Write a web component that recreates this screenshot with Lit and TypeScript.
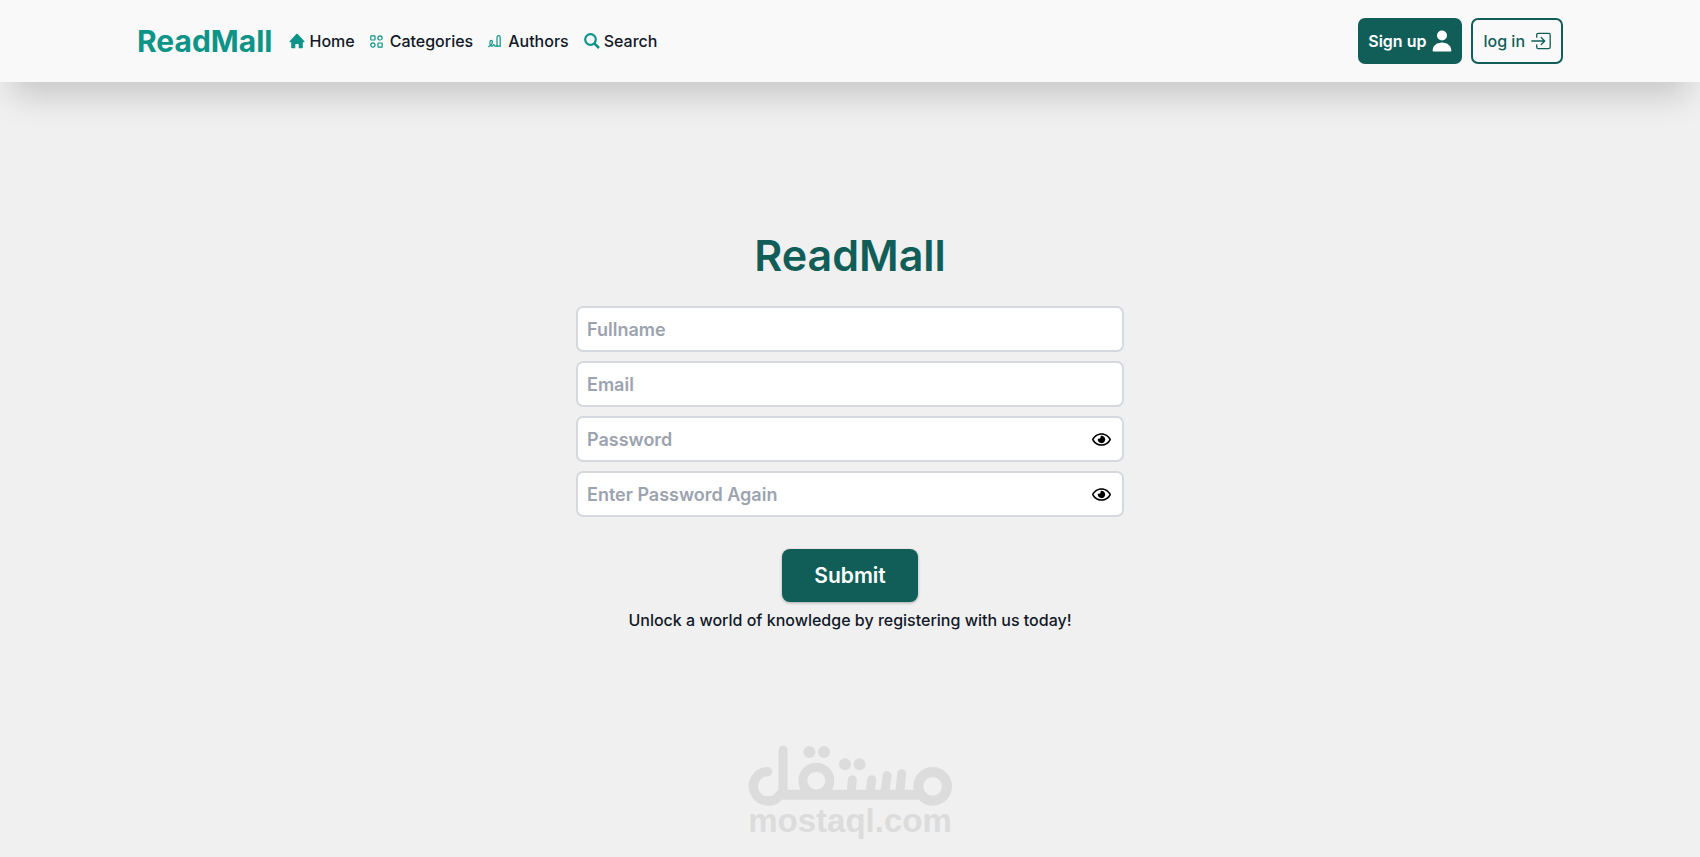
import { LitElement, html, css, svg } from "lit";
import { customElement, state } from "lit/decorators.js";

const homeIcon = html`<svg class="icon home" viewBox="0 0 16 16" aria-hidden="true">
  <path fill="currentColor" d="M7.300 1.100.8 7.900c-.6.600-.3 1.300.5 1.300H2.200v5.200c0 .5.3.8.8.8h3.300v-3.600c0-.3.2-.5.5-.5h2.400c.3 0 .5.2.5.5v3.600H13c.5 0 .8-.3.8-.8V9.200h.9c.8 0 1.100-.7.500-1.300L8.700 1.100a1 1 0 0 0-1.400 0Z"/>
</svg>`;

const categoriesIcon = html`<svg class="icon small" viewBox="0 0 13 13" fill="none" stroke="currentColor" stroke-width="1.200" aria-hidden="true">
  <rect x=".8" y=".8" width="4.200" height="4.200" rx=".4"/>
  <circle cx="10" cy="2.900" r="2.100"/>
  <circle cx="2.900" cy="10" r="2.100"/>
  <rect x="8" y="8" width="4.200" height="4.200" rx=".4"/>
</svg>`;

const authorsIcon = html`<svg class="icon small" viewBox="0 0 13 13" fill="none" stroke="currentColor" stroke-width="1.200" stroke-linecap="round" stroke-linejoin="round" aria-hidden="true">
  <path d="M.7 11.600c2-.8 3.700-3 3.700-5 0-.9-.5-1.300-1.100-1.300-.9 0-1.400.9-1.400 2.100 0 2.200.8 3.800 2 3.800 1 0 1.200-1.600 2-1.600s.4 1.600 1.300 1.600h5"/>
  <path d="M9 11.200V2.400C9 1.400 9.600.7 10.600.7s1.600.7 1.600 1.700v8.800"/>
</svg>`;

const searchIcon = html`<svg class="icon" viewBox="0 0 16 16" fill="none" stroke="currentColor" aria-hidden="true">
  <circle cx="6.500" cy="6.500" r="5.300" stroke-width="2.200"/>
  <path d="m10.300 10.300 4.700 4.700" stroke-width="2.600"/>
</svg>`;

const personIcon = html`<svg class="button-icon" viewBox="0 0 20 22" fill="currentColor" aria-hidden="true">
  <circle cx="10" cy="5.500" r="5"/>
  <path d="M.7 21c-.3-5 3.900-8.500 9.300-8.500s9.600 3.500 9.300 8.500c0 .3-.3.500-.6.500H1.300c-.3 0-.6-.2-.6-.5Z"/>
</svg>`;

const loginIcon = html`<svg class="button-icon" viewBox="0 0 20 18" fill="none" stroke="currentColor" stroke-width="1.300" stroke-linecap="round" stroke-linejoin="round" aria-hidden="true">
  <path d="M5.700 5.200V3c0-1 .7-1.700 1.700-1.700H17.500c1 0 1.700.7 1.700 1.700v12c0 1-.7 1.700-1.700 1.700H7.400c-1 0-1.700-.7-1.700-1.700v-2.200"/>
  <path d="M.8 9h12.700M10.200 5.500 13.700 9l-3.500 3.500"/>
</svg>`;

const eyeIcon = html`<svg class="eye" viewBox="0 0 576 512" fill="currentColor" aria-hidden="true">
  <path d="M288 144a110.940 110.940 0 0 0-31.240 5 55.400 55.400 0 0 1 7.240 27 56 56 0 0 1-56 56 55.400 55.400 0 0 1-27-7.240A111.710 111.710 0 1 0 288 144zm284.520 97.400C518.290 135.590 410.930 64 288 64S57.680 135.640 3.480 241.410a32.350 32.350 0 0 0 0 29.190C57.710 376.410 165.070 448 288 448s230.320-71.640 284.520-177.410a32.350 32.350 0 0 0 0-29.190zM288 400c-98.650 0-189.090-55-237.930-144C98.910 167 189.340 112 288 112s189.090 55 237.930 144C477.100 345 386.660 400 288 400z"/>
</svg>`;

const teeth = [
  [366, 150, 362, 195],
  [424, 150, 419, 195],
  [470, 138, 463, 195],
  [514, 132, 508, 195],
];
const dots = [
  [237, 67],
  [281, 67],
  [344, 104],
  [388, 104],
];

@customElement("app-root")
export class AppRoot extends LitElement {
  static styles = css`
    :host {
      display: flex;
      flex-direction: column;
      min-height: 100vh;
      background: #f0f0f0;
      color: #111827;
      font: 500 16px/24px Inter, "Open Sans", sans-serif;
    }
    *,
    *::before {
      box-sizing: border-box;
    }
    a {
      color: inherit;
      text-decoration: none;
    }
    header {
      display: flex;
      align-items: center;
      justify-content: space-between;
      padding: 18px 137px;
      background: #f9f9f9;
      box-shadow: 0 25px 34px -12px rgb(0 0 0 / 0.18);
    }
    .start,
    nav,
    .account,
    .link,
    .button {
      display: flex;
      align-items: center;
    }
    .start {
      gap: 17px;
    }
    .brand {
      color: #0d9488;
      font-size: 30px;
      font-weight: 700;
      line-height: 36px;
    }
    nav {
      gap: 15px;
    }
    .link {
      gap: 4px;
    }
    .icon {
      width: 16px;
      height: 16px;
      color: #0d9488;
    }
    .small {
      width: 13px;
      height: 13px;
      margin-right: 3px;
    }
    .account {
      gap: 9px;
    }
    .button {
      gap: 6px;
      height: 46px;
      padding: 0 10px;
      border: 2px solid #115e59;
      border-radius: 7px;
      color: #115e59;
    }
    .primary {
      background: #115e59;
      color: #fff;
      font-weight: 600;
      padding: 0 8px;
    }
    .button-icon {
      width: 20px;
      height: 22px;
    }
    main {
      display: flex;
      flex: 1;
      flex-direction: column;
      align-items: center;
      padding: 149px 16px 0;
    }
    h1 {
      margin: 0;
      color: #115e59;
      font-size: 43px;
      font-weight: 600;
      line-height: 48px;
    }
    form {
      display: flex;
      flex-direction: column;
      align-items: center;
      width: 100%;
      max-width: 548px;
      padding-top: 27px;
    }
    .fields {
      display: grid;
      gap: 9px;
      width: 100%;
    }
    .field {
      position: relative;
      display: flex;
      align-items: center;
      height: 46px;
      padding: 0 11px 0 9px;
      border: 2px solid #d5d9de;
      border-radius: 7px;
      background: #fff;
    }
    .field:focus-within {
      border-color: #115e59;
    }
    input {
      flex: 1;
      min-width: 0;
      height: 40px;
      padding: 0;
      border: 0;
      outline: 0;
      background: none;
      color: inherit;
      font: inherit;
      font-size: 18px;
      font-weight: 600;
    }
    input::placeholder {
      color: #9ca3af;
      opacity: 1;
    }
    button {
      border: 0;
      font: inherit;
      cursor: pointer;
    }
    .toggle {
      display: flex;
      padding: 0;
      background: none;
      color: #000;
    }
    .eye {
      width: 19px;
      height: 17px;
    }
    .submit {
      margin-top: 32px;
      padding: 14px 32px;
      border-radius: 8px;
      background: #115e59;
      box-shadow: 0 1px 3px rgb(0 0 0 / 0.3);
      color: #fff;
      font-size: 21px;
      font-weight: 600;
      line-height: 25px;
    }
    .tagline {
      margin: 6px 0 0;
    }
    footer {
      display: flex;
      flex-direction: column;
      align-items: center;
      padding-bottom: 23px;
      color: #dcdcdc;
      font: 700 33px/26px "Liberation Sans", sans-serif;
    }
    .mark {
      width: 206px;
      height: 64px;
    }
    .hidden-label {
      position: absolute;
      opacity: 0;
      pointer-events: none;
    }
  `;

  @state() private shown: Record<string, boolean> = {};

  private toggle(id: string) {
    this.shown = { ...this.shown, [id]: !this.shown[id] };
  }

  private field(id: string, label: string, type: string) {
    const secret = type === "password";
    return html`<div class="field">
      <label class="hidden-label" for=${id}>${label}</label>
      <input id=${id} name=${id} type=${secret && this.shown[id] ? "text" : type} placeholder=${label} />
      ${secret
        ? html`<button class="toggle" type="button" aria-label="Show ${label}" @click=${() => this.toggle(id)}>${eyeIcon}</button>`
        : null}
    </div>`;
  }

  render() {
    return html`
      <header>
        <div class="start">
          <a class="brand" href="#">ReadMall</a>
          <nav>
            <a class="link" href="#home">${homeIcon}Home</a>
            <a class="link" href="#categories">${categoriesIcon}Categories</a>
            <a class="link" href="#authors">${authorsIcon}Authors</a>
            <a class="link" href="#search">${searchIcon}Search</a>
          </nav>
        </div>
        <div class="account">
          <a class="button primary" href="#signup">Sign up ${personIcon}</a>
          <a class="button" href="#login">log in ${loginIcon}</a>
        </div>
      </header>
      <main>
        <h1>ReadMall</h1>
        <form @submit=${(e: Event) => e.preventDefault()}>
          <div class="fields">
            ${this.field("fullname", "Fullname", "text")}
            ${this.field("email", "Email", "email")}
            ${this.field("password", "Password", "password")}
            ${this.field("confirm", "Enter Password Again", "password")}
          </div>
          <button class="submit" type="submit">Submit</button>
          <p class="tagline">Unlock a world of knowledge by registering with us today!</p>
        </form>
      </main>
      <footer>
        <svg class="mark" viewBox="50 43 618 192" fill="none" stroke="currentColor" stroke-width="27" stroke-linecap="round" aria-hidden="true">
          <circle cx="607" cy="170" r="43" stroke-width="30"/>
          <circle cx="258" cy="153" r="40.500"/>
          <path d="M157 195H575" stroke-width="30" stroke-linecap="butt"/>
          <path d="M158 61V190"/>
          <path d="M112 126A44 44 0 1 0 150 194" stroke-width="28"/>
          ${teeth.map(([x1, y1, x2, y2]) => svg`<line x1=${x1} y1=${y1} x2=${x2} y2=${y2}/>`)}
          ${dots.map(([cx, cy]) => svg`<circle cx=${cx} cy=${cy} r="18" fill="currentColor" stroke="none"/>`)}
        </svg>
        <span>mostaql.com</span>
      </footer>
    `;
  }
}
